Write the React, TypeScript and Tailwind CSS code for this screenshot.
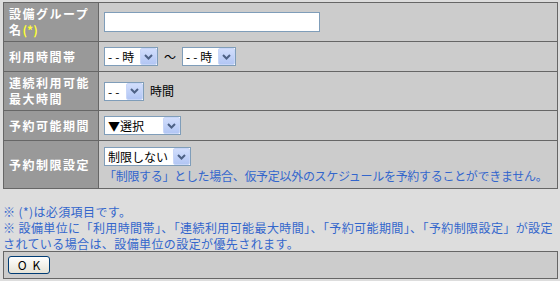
import React from "react";

const jp = "font-['Noto_Sans_CJK_JP',sans-serif]";

const Chevron = () => (
  <svg width="9" height="6" viewBox="0 0 9 6">
    <path d="M1 1 L4.5 4.5 L8 1" fill="none" stroke="#4d6185" strokeWidth="2" />
  </svg>
);

const FakeSelect = ({ label, className }: { label: React.ReactNode; className: string }) => (
  <div className={`flex h-[19px] shrink-0 items-center border border-[#7f9db9] bg-white ${className}`}>
    <span className="flex h-[17px] flex-1 items-center overflow-hidden pl-[3px] text-[12px] leading-[17px] text-black whitespace-nowrap">{label}</span>
    <span className="flex h-[17px] w-[17px] items-center justify-center rounded-[2px] border border-[#c8d6f8] bg-gradient-to-b from-[#d2defc] to-[#b2c6f4]">
      <Chevron />
    </span>
  </div>
);

const Dash = () => <span className="tracking-[3px]">--</span>;

const Label = ({ children }: { children: React.ReactNode }) => (
  <div className="flex w-[95px] shrink-0 items-center border-r border-[#666] bg-[#999] pl-[5px] text-[12px] font-bold leading-[16px] tracking-[1.5px] text-white whitespace-nowrap">
    <div>{children}</div>
  </div>
);

const Note = ({ children }: { children: React.ReactNode }) => (
  <div className="h-[16px] leading-[16px] whitespace-nowrap">{children}</div>
);

export default function App() {
  return (
    <div className={`h-[281px] w-[560px] overflow-hidden bg-[#dddddd] pt-[2px] ${jp}`}>
      <div className="ml-[3px] w-[555px] border border-[#666] bg-[#ccc]">
        <div className="flex h-[38px]">
          <Label>
            設備グループ
            <br />
            名<span className="tracking-normal text-[#ffff33]">(*)</span>
          </Label>
          <div className="flex flex-1 items-center pl-[5px]">
            <div className="h-[20px] w-[216px] border border-[#7f9db9] bg-white" />
          </div>
        </div>
        <div className="flex h-[30px] border-t border-[#666]">
          <Label>利用時間帯</Label>
          <div className="flex flex-1 items-center pl-[5px]">
            <FakeSelect label={<><Dash />時</>} className="w-[54px]" />
            <span className="mx-[6px] text-[12px] text-black">〜</span>
            <FakeSelect label={<><Dash />時</>} className="w-[54px]" />
          </div>
        </div>
        <div className="flex h-[39px] border-t border-[#666]">
          <Label>
            連続利用可能
            <br />
            最大時間
          </Label>
          <div className="flex flex-1 items-center pl-[5px]">
            <FakeSelect label={<Dash />} className="w-[40px]" />
            <span className="ml-[6px] text-[12px] text-black">時間</span>
          </div>
        </div>
        <div className="flex h-[30px] border-t border-[#666]">
          <Label>予約可能期間</Label>
          <div className="flex flex-1 items-center pl-[5px]">
            <FakeSelect label="▼選択" className="w-[77px]" />
          </div>
        </div>
        <div className="flex h-[48px] border-t border-[#666]">
          <Label>予約制限設定</Label>
          <div className="flex flex-1 flex-col pl-[5px] pt-[6px]">
            <FakeSelect label="制限しない" className="w-[87px]" />
            <div className="mt-[2px] h-[16px] text-[12px] leading-[16px] tracking-[-0.3px] text-[#3366cc] whitespace-nowrap">
              「制限する」とした場合、仮予定以外のスケジュールを予約することができません。
            </div>
          </div>
        </div>
      </div>
      <div className="mt-[13px] h-[48px] pl-[3px] pt-[2px] text-[12px] tracking-[0.4px] text-[#3366cc]">
        <Note>※ (*)は必須項目です。</Note>
        <Note>※ 設備単位に「利用時間帯」、「連続利用可能最大時間」、「予約可能期間」、「予約制限設定」が設定</Note>
        <Note>されている場合は、設備単位の設定が優先されます。</Note>
      </div>
      <div className="ml-[3px] mt-[1px] flex h-[28px] w-[555px] items-start border border-[#666] bg-[#ccc] pl-[4px] pt-[4px]">
        <button className="flex h-[18px] w-[42px] items-center justify-center rounded-[3px] border border-[#003c74] bg-gradient-to-b from-white to-[#e6e3d6] text-[12px] leading-[14px] text-black">
          <span className="tracking-[6px] pl-[6px]">OK</span>
        </button>
      </div>
    </div>
  );
}
